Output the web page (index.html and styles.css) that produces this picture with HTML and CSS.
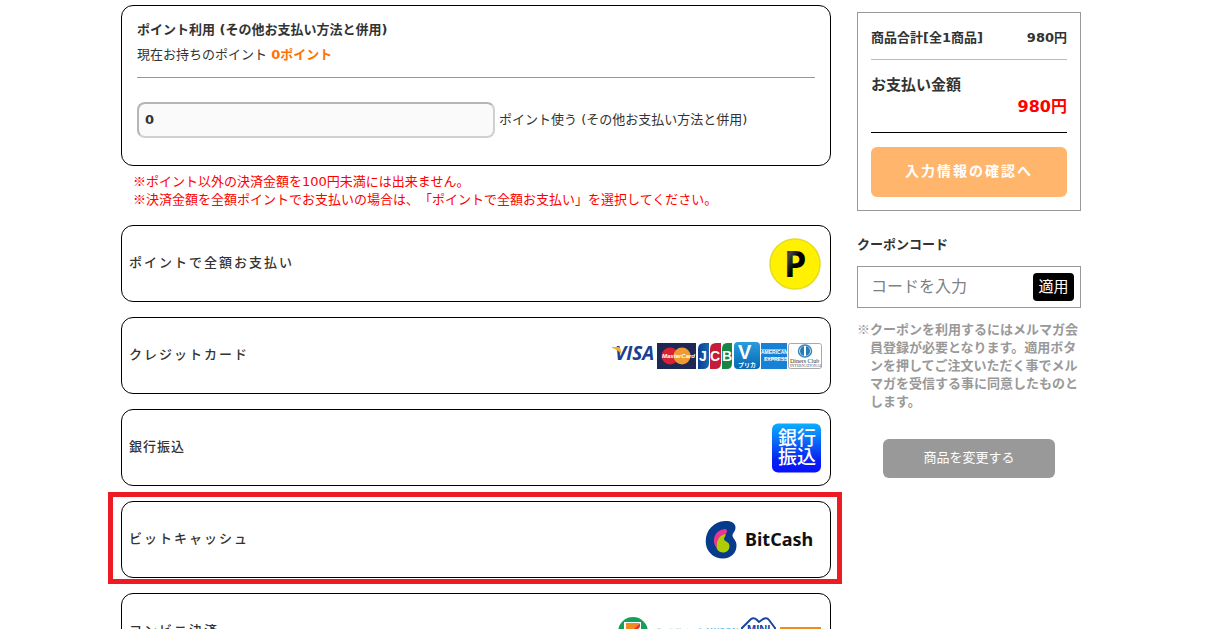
FILE: index.html
```html
<!DOCTYPE html>
<html lang="ja">
<head>
<meta charset="utf-8">
<title>お支払い方法</title>
<link rel="stylesheet" href="styles.css">
</head>
<body>
<div class="page">
  <main class="methods">
    <section class="points">
      <h2 class="points-title">ポイント利用 (その他お支払い方法と併用)</h2>
      <p class="points-balance">現在お持ちのポイント <strong class="points-value">0ポイント</strong></p>
      <div class="points-form">
        <input class="points-input" id="points" type="text" value="0">
        <label for="points">ポイント使う (その他お支払い方法と併用)</label>
      </div>
    </section>
    <div class="warnings">
      <p><span class="mark">※</span>ポイント以外の決済金額を100円未満には出来ません。</p>
      <p><span class="mark">※</span>決済金額を全額ポイントでお支払いの場合は、「ポイントで全額お支払い」を選択してください。</p>
    </div>
    <div class="method-list">
      <button class="method" type="button">
        <span class="method-name">ポイントで全額お支払い</span>
        <svg class="method-logo" width="54" height="54" viewBox="0 0 54 54" role="img" aria-label="P">
          <defs><linearGradient id="gloss" x1="0" y1="0" x2="1" y2="1"><stop offset="0" stop-color="#000"/><stop offset=".28" stop-color="#444"/><stop offset=".5" stop-color="#000"/></linearGradient></defs>
          <circle cx="27" cy="27" r="25" fill="#fff100" stroke="#e3dc20" stroke-width="1.5"/>
          <text x="16" y="40" class="logo-point" fill="url(#gloss)">P</text>
        </svg>
      </button>
      <button class="method" type="button">
        <span class="method-name">クレジットカード</span>
        <svg class="method-logo" width="210" height="30" viewBox="0 0 210 30" role="img" aria-label="VISA MasterCard JCB">
          <defs>
            <linearGradient id="jb" x1="0" x2="1"><stop offset="0" stop-color="#0a3f94"/><stop offset="1" stop-color="#1769b0"/></linearGradient>
            <linearGradient id="vp" x1="0" y1="0" x2="0" y2="1"><stop offset="0" stop-color="#2a9cdd"/><stop offset="1" stop-color="#0868b4"/></linearGradient>
          </defs>
          <text x="3" y="19" class="logo-visa">VISA</text>
          <path fill="#f4ad2e" d="M0 6h6q2 0 2.500 2l1.500 6q-4-5.500-10-7z"/>
          <rect x="45" y="2" width="39" height="26" fill="#1d2855"/>
          <circle cx="58" cy="15" r="8.500" fill="#d92131"/><circle cx="70" cy="15" r="8.500" fill="#f09a32"/>
          <text x="50" y="17" class="logo-mc">MasterCard</text>
          <path fill="url(#jb)" d="M92 2h5v20q0 6-6 6h-5V8q0-6 6-6z"/>
          <path fill="#c71b3a" d="M104 2h5v20q0 6-6 6h-5V8q0-6 6-6z"/>
          <path fill="#168643" d="M115 2h5v20q0 6-5 6h-5V8q0-6 5-6z"/>
          <text x="87" y="20" class="logo-jcb">J</text><text x="98" y="20" class="logo-jcb">C</text><text x="110" y="20" class="logo-jcb">B</text>
          <rect x="122" y="1" width="26" height="27" rx="4" fill="url(#vp)"/>
          <text x="126" y="18" class="logo-v">V</text>
          <text x="126" y="26" class="logo-vp">プリカ</text>
          <rect x="149" y="2" width="26" height="26" fill="#1681d5"/>
          <path fill="#fff" d="M149 8h25v1h-25zM153 17h22v1h-22z" opacity=".5"/>
          <text x="149" y="13" class="logo-amex">AMERICAN</text><text x="152" y="20" class="logo-amex">EXPRESS</text>
          <rect x="176.500" y="2.500" width="33" height="25" rx="2" fill="#fff" stroke="#a8a8a8"/>
          <ellipse cx="193" cy="10" rx="6.500" ry="6" fill="#fff" stroke="#3683bd" stroke-width="1.500"/><path fill="#287ab8" d="M192 5v10q-4-1-4-5t4-5zM194 5v10q4-1 4-5t-4-5z"/>
          <text x="178" y="22" class="logo-diners">Diners Club</text><text x="178" y="26" class="logo-inter">INTERNATIONAL</text>
        </svg>
      </button>
      <button class="method" type="button">
        <span class="method-name method-name-tight">銀行振込</span>
        <svg class="method-logo" width="50" height="50" viewBox="0 0 50 50" role="img" aria-label="銀行振込">
          <defs><linearGradient id="bank" x1="0" y1="0" x2="0" y2="1"><stop offset="0" stop-color="#0bafff"/><stop offset=".75" stop-color="#0821ef"/><stop offset="1" stop-color="#0710ff"/></linearGradient></defs>
          <rect width="49" height="49" x="0" y=".5" rx="6" fill="url(#bank)"/>
          <text x="6" y="22" class="logo-bank">銀行</text><text x="6" y="41" class="logo-bank">振込</text>
        </svg>
      </button>
      <button class="method method-marked" type="button">
        <span class="method-name">ビットキャッシュ</span>
        <svg class="method-logo" width="117" height="40" viewBox="0 0 117 40" role="img" aria-label="BitCash">
          <path fill="#073b8c" d="M20 1C26 .5 30.500 3 30.500 7.500c0 4-3 5.500-3 8 0 3 4 4.500 4 10C31.500 33 26 38.500 18 38.500 8 38.500.7 31 .7 21.500.7 10 9 1.500 20 1z"/>
          <path fill="#adcd06" d="M20 12.500c2 2.500-1 4.500-1 6.500 0 2.500 5.500 2.500 5.500 7 0 4-2.500 6.500-6.500 6.500-4 0-7-3-7-8 0-7 4-11 9-12z"/>
          <path fill="#e73694" d="M21 9c2 2 1 4.500-2 5.500-5 1.500-8 6.500-7 13.500C6.500 23 8 9.500 21 9z"/>
          <text x="40" y="26" class="logo-bitcash">BitCash</text>
        </svg>
      </button>
      <button class="method" type="button">
        <span class="method-name">コンビニ決済</span>
        <svg class="method-logo" width="204" height="34" viewBox="0 0 204 34" role="img" aria-label="コンビニ">
          <circle cx="15" cy="17" r="15" fill="#13a057"/>
          <path fill="#fff" d="M6 7h17v20H6z"/><path fill="#ef8b20" d="M8 8h13l-2 6H8z"/><path fill="#e5392f" d="M22 8v4q-6 5-6 16h-6q1-10 7-15z"/>
          <text x="39" y="17" class="logo-family">FamilyMart</text>
          <text x="81" y="19" class="logo-lawson">LAWSON</text>
          <path fill="#fff" stroke="#1745a0" stroke-width="2" d="M124 17v-4l9-9q3-2 6 1l2 2 4-3q4-2 6 1l6 8v4"/>
          <text x="129" y="18" class="logo-mini">MINI</text>
          <path fill="#ef8b20" d="M162 12h41v14h-41z"/>
        </svg>
      </button>
    </div>
  </main>
  <aside class="side">
    <section class="summary">
      <div class="summary-row"><span>商品合計[全1商品]</span><span>980円</span></div>
      <div class="total"><span class="total-label">お支払い金額</span><span class="total-value">980円</span></div>
      <button class="confirm" type="button">入力情報の確認へ</button>
    </section>
    <label class="coupon-label" for="coupon">クーポンコード</label>
    <div class="coupon">
      <input class="coupon-input" id="coupon" type="text" placeholder="コードを入力">
      <button class="coupon-apply" type="button">適用</button>
    </div>
    <p class="coupon-note"><span class="mark">※</span>クーポンを利用するにはメルマガ会員登録が必要となります。適用ボタンを押してご注文いただく事でメルマガを受信する事に同意したものとします。</p>
    <button class="change" type="button">商品を変更する</button>
  </aside>
</div>
</body>
</html>
```

FILE: styles.css
```css
* { box-sizing: border-box; }
body {
  margin: 0;
  padding: 5px 5px 16px 0;
  background: #fff;
  color: #333;
  font-family: "DejaVu Sans", "Noto Sans CJK JP", sans-serif;
  font-size: 13px;
  line-height: 18px;
  text-spacing-trim: space-all;
}
h2, p { margin: 0; }
button, input { font-family: inherit; color: inherit; }
button { cursor: pointer; }
.mark {
  font-family: "Noto Sans CJK JP", sans-serif;
  font-weight: 400;
  line-height: 1;
}

.page {
  display: flex;
  align-items: flex-start;
  gap: 26px;
  max-width: 960px;
  margin: 0 auto;
}
.methods { flex: 1; min-width: 0; }

.points {
  padding: 15px 15px 27px;
  border: 1px solid #000;
  border-radius: 12px;
}
.points-title { font-size: 13px; line-height: 18px; }
.points-balance {
  padding: 7px 0 13px;
  border-bottom: 1px solid #999;
}
.points-value { color: #ff7200; }
.points-form {
  display: flex;
  align-items: center;
  gap: 4px;
  padding-top: 24px;
}
.points-input {
  flex: 0 1 358px;
  min-width: 0;
  height: 36px;
  padding: 0 6px 2px;
  border: 2px solid;
  border-color: #b5b5b5 #d0d0d0 #d0d0d0 #b5b5b5;
  border-radius: 8px;
  background: #fafafa;
  font-size: 13px;
  font-weight: 700;
}
.warnings { padding: 7px 12px 16px; color: #f00; }

.method-list { display: flex; flex-direction: column; gap: 15px; }
.method {
  position: relative;
  display: flex;
  align-items: center;
  justify-content: space-between;
  min-height: 77px;
  padding: 0 8px 0 7px;
  border: 1px solid #000;
  border-radius: 12px;
  background: #fff;
  text-align: left;
}
.method-name {
  padding-bottom: 4px;
  font-size: 13px;
  font-weight: 500;
  letter-spacing: 2px;
}
.method-name-tight { letter-spacing: 1px; }
.method-logo { flex: none; }
.method-marked::after {
  content: "";
  position: absolute;
  inset: -10px -12px -7px -14px;
  border: 5px solid #ed1c24;
  pointer-events: none;
}

.logo-point { font: 700 36px "Noto Sans", sans-serif; }
.logo-visa { font: italic 700 19px "Open Sans", sans-serif; fill: #183f91; }
.logo-mc { font: italic 700 6px "Liberation Sans", sans-serif; fill: #fff; }
.logo-jcb { font: 700 14px "Liberation Sans", sans-serif; fill: #fff; }
.logo-v { font: 700 20px "Liberation Sans", sans-serif; fill: #fff; }
.logo-vp { font: 700 6px "Noto Sans CJK JP", sans-serif; fill: #fff; }
.logo-amex { font: 700 5px "Liberation Sans", sans-serif; fill: #fff; }
.logo-diners { font: 6px "Liberation Serif", serif; fill: #333; }
.logo-inter { font: 4px "Liberation Serif", serif; fill: #555; }
.logo-bank { font: 500 19px/1 "Noto Sans CJK JP", sans-serif; fill: #fff; }
.logo-bitcash { font: 700 18px "Noto Sans", sans-serif; fill: #111; }
.logo-family { font: 700 6px "Liberation Sans", sans-serif; fill: #c3d5df; }
.logo-lawson { font: 700 9px "Liberation Sans", sans-serif; fill: #78bfea; }
.logo-mini { font: 700 11px "Liberation Sans", sans-serif; fill: #1745a0; }

.side { flex: 0 0 224px; min-width: 0; padding-top: 7px; }
.summary {
  padding: 13px;
  border: 1px solid #999;
  font-weight: 700;
}
.summary-row {
  display: flex;
  justify-content: space-between;
  padding: 3px 0 12px;
  border-bottom: 1px solid #bbb;
}
.total {
  display: flex;
  flex-direction: column;
  padding: 14px 0;
  border-bottom: 1px solid #000;
  line-height: 22px;
}
.total-label { font-size: 15px; }
.total-value {
  align-self: flex-end;
  color: #f00;
  font-size: 16px;
}
.confirm {
  width: 100%;
  height: 50px;
  margin-top: 14px;
  padding: 0 0 4px;
  border: 0;
  border-radius: 6px;
  background: #ffb66c;
  color: #fff;
  font-size: 14px;
  font-weight: 700;
  letter-spacing: 2px;
}
.coupon-label {
  display: block;
  margin: 25px 0 12px;
  font-weight: 700;
}
.coupon {
  display: flex;
  align-items: center;
  height: 42px;
  padding: 0 6px 0 13px;
  border: 1px solid #999;
}
.coupon-input {
  flex: 1;
  min-width: 0;
  padding: 0 0 2px;
  border: 0;
  background: none;
  font-size: 16px;
}
.coupon-input::placeholder { color: #808080; }
.coupon-apply {
  width: 41px;
  height: 28px;
  padding: 0 0 4px;
  border: 0;
  border-radius: 4px;
  background: #000;
  color: #fff;
  font-size: 15px;
}
.coupon-note {
  margin: 13px 0 28px;
  padding-left: 13px;
  color: #999;
  font-weight: 700;
  text-indent: -13px;
}
.change {
  display: block;
  width: 172px;
  height: 39px;
  margin: 0 auto;
  padding: 0 0 4px;
  border: 0;
  border-radius: 6px;
  background: #999;
  color: #fff;
  font-size: 13px;
}
```
